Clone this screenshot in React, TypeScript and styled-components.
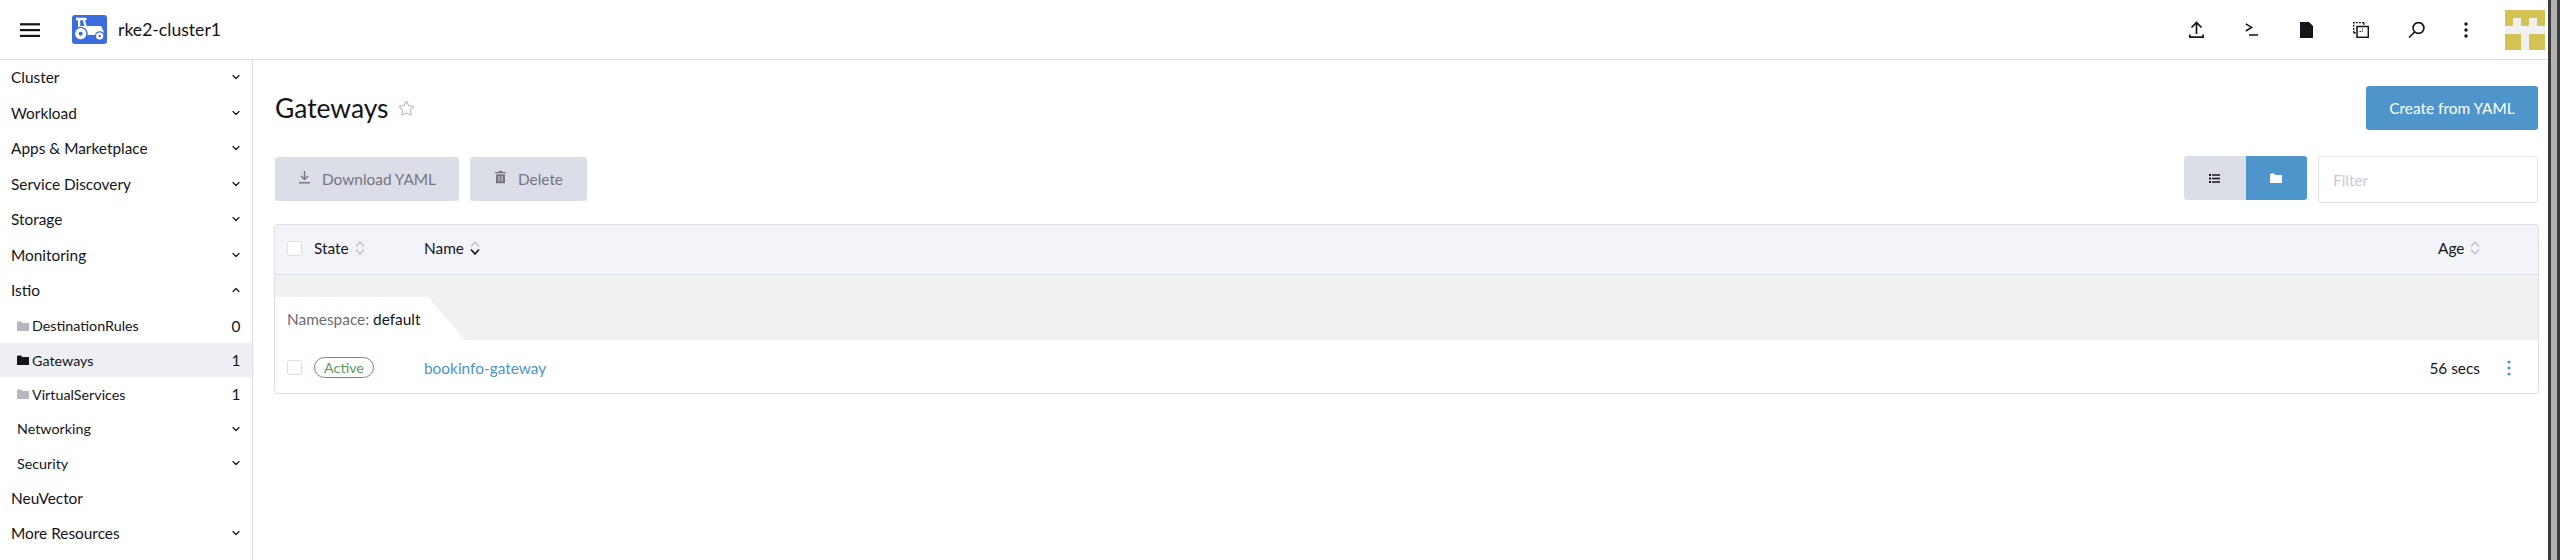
import React from "react";
import styled, { createGlobalStyle } from "styled-components";
import { ChevronDown, ChevronUp, Star } from "lucide-react";

const Global = createGlobalStyle`
  html, body { margin: 0; padding: 0; background: #fff; }
  body { font-family: Lato, "Liberation Sans", sans-serif; color: #141419; font-size: 15.4px; overflow: hidden; }
  * { box-sizing: border-box; }
`;

const Shell = styled.div`
  display: flex;
  width: 2560px;
  height: 560px;
`;
const Page = styled.div`
  flex: 1;
  min-width: 0;
  display: flex;
  flex-direction: column;
`;
const TopBar = styled.header`
  height: 60px;
  flex: none;
  display: flex;
  align-items: center;
  border-bottom: 1px solid #dcdee7;
  padding: 0 3px 0 20px;
`;
const Burger = styled.svg`
  width: 20px;
  height: 14px;
  display: block;
`;
const Logo = styled.svg`
  width: 35px;
  height: 29px;
  margin: -1px 0 0 32px;
  display: block;
`;
const ClusterName = styled.span`
  margin-left: 11px;
  font-size: 17.6px;
  color: #141419;
`;
const TopActions = styled.div`
  margin-left: auto;
  display: flex;
  align-items: center;
  height: 40px;
`;
const TopIcon = styled.span<{ $w: number }>`
  width: ${p => p.$w}px;
  height: 40px;
  display: flex;
  align-items: center;
  justify-content: center;
  color: #141419;
`;
const Avatar = styled.svg`
  width: 40px;
  height: 40px;
  margin-left: 16.5px;
  display: block;
`;
const Body = styled.div`
  flex: 1;
  display: flex;
  min-height: 0;
`;
const Side = styled.nav`
  width: 253px;
  flex: none;
  border-right: 1px solid #dcdee7;
`;
const NavRow = styled.div<{ $sub?: boolean; $active?: boolean }>`
  height: ${p => (p.$sub ? 34.4 : 35.5)}px;
  display: flex;
  align-items: center;
  padding: 0 10px ${p => (p.$sub ? 0 : 1)}px ${p => (p.$sub ? 17 : 11)}px;
  background: ${p => (p.$active ? "#eeeff4" : "transparent")};
  font-size: ${p => (p.$sub ? 14.3 : 15.4)}px;
  color: #141419;
`;
const NavLabel = styled.span`
  flex: 1;
`;
const NavCount = styled.span`
  font-size: 15.4px;
  width: 12px;
  text-align: center;
`;
const FolderIcon = styled.svg<{ $tone: string }>`
  width: 12px;
  height: 10px;
  margin-right: 3px;
  fill: ${p => p.$tone};
`;
const Main = styled.main`
  flex: 1;
  min-width: 0;
  padding: 26px 9px 0 21px;
`;
const TitleRow = styled.div`
  display: flex;
  align-items: center;
  height: 44px;
  padding: 0 1px;
`;
const Title = styled.h1`
  margin: 0;
  font-size: 26.4px;
  font-weight: 400;
  color: #141419;
`;
const StarWrap = styled.span`
  display: flex;
  margin-left: 9px;
  color: #b4b5c6;
`;
const PrimaryButton = styled.button`
  margin-left: auto;
  width: 172px;
  height: 44px;
  border: 0;
  border-radius: 3px;
  background: #4d95cb;
  color: #fff;
  font: 15.4px Lato, sans-serif;
`;
const ToolRow = styled.div`
  display: flex;
  align-items: flex-start;
  margin-top: 26px;
  height: 47px;
  padding: 0 1px;
`;
const GrayButton = styled.button<{ $w: number }>`
  width: ${p => p.$w}px;
  height: 44px;
  margin: 1px 11px 0 0;
  border: 0;
  border-radius: 3px;
  background: #dcdee7;
  color: #75757f;
  font: 15.4px Lato, sans-serif;
  display: flex;
  align-items: center;
  justify-content: center;
  gap: 11px;
`;
const BtnIcon = styled.svg`
  width: 13px;
  height: 14px;
  margin-top: -5px;
  display: block;
`;
const Spacer = styled.div`
  flex: 1;
`;
const Toggle = styled.div`
  display: flex;
  border-radius: 3px;
  overflow: hidden;
  height: 44px;
`;
const ToggleItem = styled.span<{ $on?: boolean }>`
  width: 61.5px;
  display: flex;
  align-items: center;
  justify-content: center;
  padding-left: ${p => (p.$on ? 3 : 0)}px;
  background: ${p => (p.$on ? "#4d95cb" : "#dcdee7")};
`;
const FilterInput = styled.input`
  width: 220px;
  height: 47px;
  margin-left: 11px;
  border: 1px solid #e2e3ea;
  border-radius: 3px;
  padding: 0 14px;
  font: 15.4px Lato, sans-serif;
  &::placeholder { color: #c8c9d6; }
`;
const Table = styled.div`
  margin-top: 21px;
  border: 1px solid #dcdee7;
  border-radius: 4px;
  overflow: hidden;
`;
const HeadRow = styled.div`
  height: 50px;
  display: flex;
  align-items: center;
  background: #f3f4f9;
  border-bottom: 1px solid #dcdee7;
  padding: 0 0 3px 12px;
`;
const Check = styled.span`
  width: 15px;
  height: 15px;
  border: 1px solid #dcdee7;
  border-radius: 3px;
  background: #fff;
  flex: none;
`;
const HeadCell = styled.div<{ $w?: number }>`
  display: flex;
  align-items: center;
  gap: 6px;
  ${p => (p.$w ? `width: ${p.$w}px; flex: none;` : "flex: 1;")}
`;
const StateHead = styled(HeadCell)`
  margin-left: 12px;
`;
const SortIcon = styled.svg`
  width: 10px;
  height: 14px;
  fill: none;
`;
const GroupBand = styled.div`
  height: 65px;
  background: #f1f1f1;
  display: flex;
  align-items: flex-end;
`;
const GroupTab = styled.div`
  width: 190px;
  height: 43px;
  background: #fff;
  border-top-left-radius: 4px;
  clip-path: polygon(0 0, 153px 0, 190px 100%, 0 100%);
  padding: 13px 0 0 12px;
  line-height: 18px;
  color: #6c6c76;
`;
const GroupValue = styled.span`
  color: #141419;
`;
const DataRow = styled.div`
  height: 53px;
  display: flex;
  align-items: center;
  padding: 2px 0 0 12px;
`;
const Badge = styled.span`
  width: 60px;
  height: 21px;
  border: 1px solid #5d995d;
  border-radius: 11px;
  color: #5d995d;
  font-size: 14.3px;
  display: flex;
  align-items: center;
  justify-content: center;
`;
const RowState = styled.div`
  width: 110px;
  margin-left: 12px;
  flex: none;
`;
const RowLink = styled.a`
  flex: 1;
  color: #4d95cb;
`;
const RowAge = styled.div`
  flex: none;
  white-space: nowrap;
`;
const Kebab = styled.span`
  width: 58px;
  flex: none;
  display: flex;
  justify-content: center;
`;
const Edge = styled.div`
  width: 12px;
  flex: none;
  background: #b3b3b3;
  border-left: 3px solid #3c3c3c;
  border-right: 3px solid #3c3c3c;
`;

const Chevron = ({ up }: { up?: boolean }) =>
  up ? <ChevronUp size={12} strokeWidth={2.4} /> : <ChevronDown size={12} strokeWidth={2.4} />;

const Fold = ({ tone = "#b6b6c2" }: { tone?: string }) => (
  <FolderIcon $tone={tone} viewBox="0 0 12 10"><path d="M0 1.2 .8.5h3.4L5.4 2H12v8H0z" /></FolderIcon>
);

const Sort = ({ dark }: { dark?: boolean }) => (
  <SortIcon viewBox="0 0 10 14">
    <path d="M1 5.5 5 1l4 4.5" stroke="#bcbdcc" strokeWidth="1.2" />
    <path d="M1 8.5l4 4.5 4-4.5" stroke={dark ? "#141419" : "#bcbdcc"} strokeWidth={dark ? 1.6 : 1.2} />
  </SortIcon>
);

const TOP: { w: number; icon: React.ReactNode }[] = [
  { w: 55, icon: <svg width="15" height="17" viewBox="0 0 15 17" fill="none" stroke="#141419" strokeWidth="1.7"><path d="M7.5 13V1.5M2.5 6.5l5-5 5 5M.9 13.5v2.6h13.2v-2.6" /></svg> },
  { w: 55, icon: <svg width="13" height="13" viewBox="0 0 13 13" fill="none" stroke="#141419" strokeWidth="1.5"><path d="M.8.8 6.6 4.4.8 8M4 12h9" /></svg> },
  { w: 55, icon: <svg width="13" height="16" viewBox="0 0 13 16" fill="#141419"><path d="M0 0h9l4 4v12H0z" /></svg> },
  { w: 55, icon: <svg width="16" height="16" viewBox="0 0 16 16" fill="none" stroke="#141419" strokeWidth="1.3"><path d="M.7 11V.7h10.3" strokeDasharray="2 1.1" /><path d="M11 .7V4M.7 11H4" strokeDasharray="2 1.1" /><rect x="4" y="4.5" width="11.300" height="10.800" strokeWidth="1.5" /><path d="M6.5 9.500h3v-3" strokeWidth="1" strokeDasharray="1.5 1" /></svg> },
  { w: 55, icon: <svg width="17" height="16" viewBox="0 0 17 16" fill="none" stroke="#141419" strokeWidth="1.6"><circle cx="10.5" cy="6" r="5.4" /><path d="M6.6 10 1 15.500" /></svg> },
  { w: 45, icon: <svg width="4" height="16" viewBox="0 0 4 16" fill="#141419"><circle cx="2" cy="2" r="1.7" /><circle cx="2" cy="8" r="1.7" /><circle cx="2" cy="14" r="1.7" /></svg> },
];

export default function App() {
  return (
    <Shell>
      <Global />
      <Page>
        <TopBar>
          <Burger viewBox="0 0 20 14" fill="#141419"><rect width="20" height="2.2" y=".2" /><rect width="20" height="2.2" y="6" /><rect width="20" height="2.2" y="11.8" /></Burger>
          <Logo viewBox="0 0 35 29">
            <rect width="35" height="29" rx="3" fill="#3d6be0" />
            <path fill="#fff" d="M4 2.7h10.5V5.3H13l1.6 5.700H29l2.6 5v4H14v-4H6V5.300H4zM8.200 5.300V11h4.200L10.900 5.300z" fillRule="evenodd" />
            <circle cx="8.7" cy="18.7" r="7" fill="#3d6be0" />
            <circle cx="8.7" cy="18.7" r="5.6" fill="#fff" />
            <circle cx="8.7" cy="18.7" r="2" fill="#3d6be0" />
            <circle cx="27.7" cy="21" r="4.8" fill="#3d6be0" />
            <circle cx="27.7" cy="21" r="3.6" fill="#fff" />
            <circle cx="27.7" cy="21" r="1.2" fill="#3d6be0" />
          </Logo>
          <ClusterName>rke2-cluster1</ClusterName>
          <TopActions>
            {TOP.map((item, i) => <TopIcon key={i} $w={item.w}>{item.icon}</TopIcon>)}
            <Avatar viewBox="0 0 5 5" shapeRendering="crispEdges">
              <rect width="5" height="5" fill="#d4c254" />
              <path d="M1 1h1v1H1zM3 1h1v1H3zM0 2h5v1H0zM2 3h1v2H2z" fill="#f0f0f0" />
            </Avatar>
          </TopActions>
        </TopBar>
        <Body>
          <Side>
            <NavRow><NavLabel>Cluster</NavLabel><Chevron /></NavRow>
            <NavRow><NavLabel>Workload</NavLabel><Chevron /></NavRow>
            <NavRow><NavLabel>Apps &amp; Marketplace</NavLabel><Chevron /></NavRow>
            <NavRow><NavLabel>Service Discovery</NavLabel><Chevron /></NavRow>
            <NavRow><NavLabel>Storage</NavLabel><Chevron /></NavRow>
            <NavRow><NavLabel>Monitoring</NavLabel><Chevron /></NavRow>
            <NavRow><NavLabel>Istio</NavLabel><Chevron up /></NavRow>
            <NavRow $sub><Fold /><NavLabel>DestinationRules</NavLabel><NavCount>0</NavCount></NavRow>
            <NavRow $sub $active><Fold tone="#141419" /><NavLabel>Gateways</NavLabel><NavCount>1</NavCount></NavRow>
            <NavRow $sub><Fold /><NavLabel>VirtualServices</NavLabel><NavCount>1</NavCount></NavRow>
            <NavRow $sub><NavLabel>Networking</NavLabel><Chevron /></NavRow>
            <NavRow $sub><NavLabel>Security</NavLabel><Chevron /></NavRow>
            <NavRow><NavLabel>NeuVector</NavLabel></NavRow>
            <NavRow><NavLabel>More Resources</NavLabel><Chevron /></NavRow>
          </Side>
          <Main>
            <TitleRow>
              <Title>Gateways</Title>
              <StarWrap><Star size={17} strokeWidth={1.5} /></StarWrap>
              <PrimaryButton>Create from YAML</PrimaryButton>
            </TitleRow>
            <ToolRow>
              <GrayButton $w={184}>
                <BtnIcon viewBox="0 0 13 14" fill="none" stroke="#75757f" strokeWidth="1.4"><path d="M6.5 1v8M3 6l3.500 3.500L10 6M1 12.700h11" /></BtnIcon>
                Download YAML
              </GrayButton>
              <GrayButton $w={117}>
                <BtnIcon viewBox="0 0 13 14" fill="#75757f"><path d="M1 2h3.500l.5-1.200h3L8.500 2H12v1.300H1zM2 4.200h9V13.200H2zM4.500 6v5.500h1V6zM7.500 6v5.500h1V6z" fillRule="evenodd" /></BtnIcon>
                Delete
              </GrayButton>
              <Spacer />
              <Toggle>
                <ToggleItem>
                  <svg width="11" height="9" viewBox="0 0 11 9" fill="#141419"><path d="M0 0h2v2H0zM3 .2h8v1.600H3zM0 3.500h2v2H0zM3 3.700h8v1.600H3zM0 7h2v2H0zM3 7.200h8v1.600H3z" /></svg>
                </ToggleItem>
                <ToggleItem $on><Fold tone="#fff" /></ToggleItem>
              </Toggle>
              <FilterInput placeholder="Filter" />
            </ToolRow>
            <Table>
              <HeadRow>
                <Check />
                <StateHead $w={110}>State <Sort /></StateHead>
                <HeadCell>Name <Sort dark /></HeadCell>
                <HeadCell $w={100}>Age <Sort /></HeadCell>
              </HeadRow>
              <GroupBand>
                <GroupTab>Namespace: <GroupValue>default</GroupValue></GroupTab>
              </GroupBand>
              <DataRow>
                <Check />
                <RowState><Badge>Active</Badge></RowState>
                <RowLink>bookinfo-gateway</RowLink>
                <RowAge>56 secs</RowAge>
                <Kebab>
                  <svg width="4" height="16" viewBox="0 0 4 16" fill="#4d95cb"><circle cx="2" cy="2" r="1.6" /><circle cx="2" cy="8" r="1.6" /><circle cx="2" cy="14" r="1.6" /></svg>
                </Kebab>
              </DataRow>
            </Table>
          </Main>
        </Body>
      </Page>
      <Edge />
    </Shell>
  );
}
